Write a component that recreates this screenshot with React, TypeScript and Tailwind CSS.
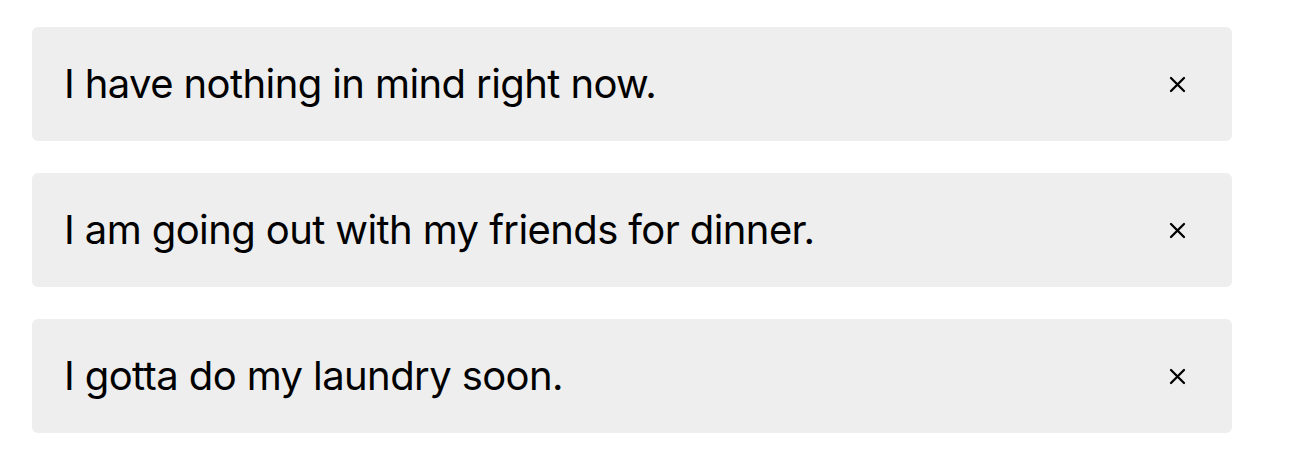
import React from "react";

const items = [
  "I have nothing in mind right now.",
  "I am going out with my friends for dinner.",
  "I gotta do my laundry soon.",
];

export default function App() {
  return (
    <div
      className="bg-white w-[1290px] h-[476px] pt-[27px] pl-8"
      style={{ fontFamily: "Inter, 'Noto Sans', sans-serif" }}
    >
      <div className="flex flex-col gap-8 w-[1200px]">
        {items.map((t) => (
          <div
            key={t}
            className="flex items-center justify-between bg-[#eeeeee] rounded-[6px] h-[114px] pl-8 pr-[46px]"
          >
            <span className="text-[40px] leading-[50px] tracking-[-0.6px] text-black">{t}</span>
            <svg width="17" height="17" viewBox="0 0 17 17" className="text-black">
              <path d="M2 2 L15 15 M15 2 L2 15" stroke="currentColor" strokeWidth="2.3" strokeLinecap="round" fill="none" />
            </svg>
          </div>
        ))}
      </div>
    </div>
  );
}
